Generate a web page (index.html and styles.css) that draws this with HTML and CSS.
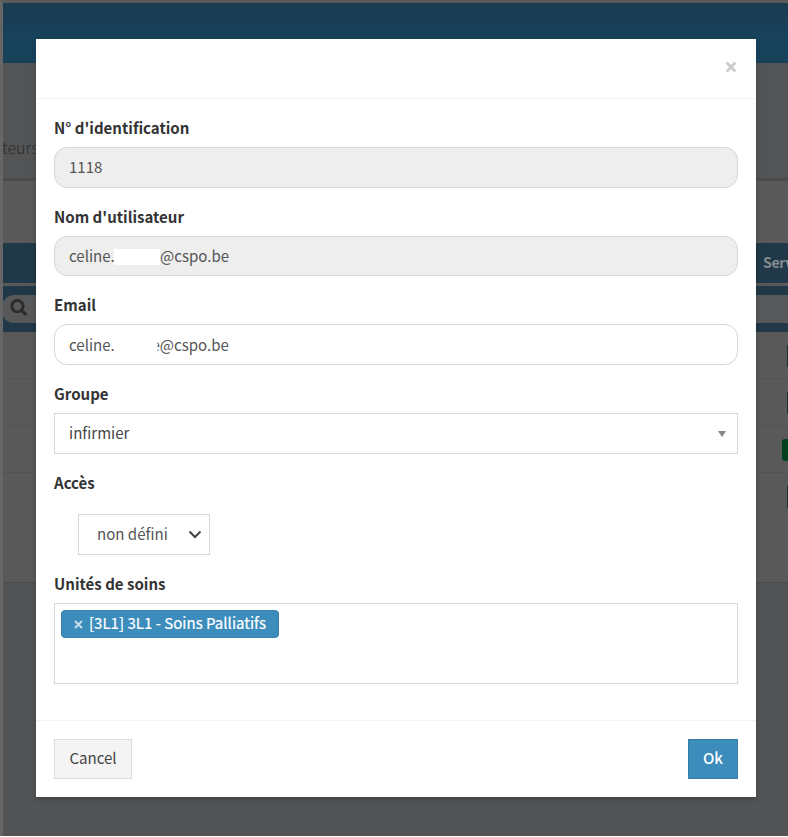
FILE: index.html
```html
<!DOCTYPE html>
<html lang="fr">
<head>
<meta charset="utf-8">
<title>Utilisateurs</title>
<link rel="stylesheet" href="styles.css">
</head>
<body>
<div class="page">
  <div class="navbar"></div>
  <div class="heading"><span>teurs</span></div>
  <div class="toolbar"></div>
  <div class="thead"><span>Serv</span></div>
  <div class="filters">
    <div class="filter filter-left"><svg class="search" viewBox="0 0 16 16"><circle cx="6.6" cy="6.4" r="5"/><path d="M10.5 10.3 L14.6 14.2"/></svg></div>
    <div class="filter"></div>
  </div>
  <div class="row"><i class="tag"></i></div>
  <div class="row"><i class="tag"></i></div>
  <div class="row"><i class="tag wide"></i></div>
  <div class="row last"><i class="tag"></i></div>
  <div class="rest"></div>
</div>

<div class="modal">
  <div class="modal-header">
    <svg class="close" viewBox="0 0 12 12"><path d="M1.6 1.6 L10.4 10.4 M10.4 1.6 L1.6 10.4"/></svg>
  </div>
  <div class="modal-body">
    <div class="group">
      <div class="label">N° d'identification</div>
      <div class="input readonly">1118</div>
    </div>
    <div class="group short">
      <div class="label">Nom d'utilisateur</div>
      <div class="input readonly"><span>celine.</span><i class="mask"></i><span>@cspo.be</span></div>
    </div>
    <div class="group">
      <div class="label">Email</div>
      <div class="input email"><span>celine.</span><span class="tail">e@cspo.be</span></div>
    </div>
    <div class="group">
      <div class="label">Groupe</div>
      <div class="input square"><span class="grow">infirmier</span><i class="arrow"></i></div>
    </div>
    <div class="group access">
      <div class="label">Accès</div>
      <div class="input square select"><span>non défini</span><svg class="chevron" viewBox="0 0 14 9"><path d="M1.5 1.5 L7 7 L12.5 1.5"/></svg></div>
    </div>
    <div class="group">
      <div class="label">Unités de soins</div>
      <div class="multi">
        <div class="chip"><svg viewBox="0 0 9 9"><path d="M1 1 L8 8 M8 1 L1 8"/></svg><span>[3L1] 3L1 - Soins Palliatifs</span></div>
      </div>
    </div>
  </div>
  <div class="modal-footer">
    <div class="btn">Cancel</div>
    <div class="btn primary">Ok</div>
  </div>
</div>
</body>
</html>
```

FILE: styles.css
```css
* { box-sizing: border-box; }
body {
  margin: 0;
  height: 837px;
  overflow: hidden;
  background: #fff;
  font-family: "Noto Sans CJK SC", "Noto Sans", sans-serif;
  font-size: 15.05px;
  line-height: 24px;
  color: #555;
  white-space: nowrap;
}
.page {
  height: 836px;
  display: flex;
  flex-direction: column;
  border-top: 3px solid #595959;
  border-left: 3px solid #666;
  background: #595959;
  overflow: hidden;
}
.page > * { flex: none; }
.navbar { height: 60px; background: linear-gradient(#1a3b51, #18415a 50%); }
.heading {
  height: 118px;
  padding-top: 72px;
  background: #535455;
  border-bottom: 3px solid #4a4b4d;
  color: #2b2c2d;
  font-size: 16px;
  font-weight: 300;
}
.heading span { margin-left: -1px; }
.toolbar { height: 62px; }
.thead {
  height: 40px;
  margin-bottom: 3px;
  padding: 7px 0 0 760px;
  background: #203847;
  color: #868d91;
  font-size: 14px;
  font-weight: 700;
  letter-spacing: -.3px;
}
.filters {
  height: 46px;
  padding: 9px 0;
  display: flex;
  justify-content: space-between;
  background: #203847;
}
.filter { width: 100px; height: 28px; background: #575859; }
.filter-left { border-radius: 12px 0 0 12px; padding: 4px 0 0 8px; margin-left: -1px; }
.search { display: block; width: 18px; height: 18px; fill: none; stroke: #2c2c2c; stroke-width: 2.6; }
.row {
  height: 47px;
  padding-top: 13px;
  border-bottom: 1px solid #525252;
  display: flex;
  justify-content: flex-end;
}
.tag { width: 1px; height: 22px; background: #12372a; }
.tag.wide { width: 6px; background: #00421f; border-radius: 3px 0 0 3px; }
.row.last { height: 110px; border-bottom-color: #4a4b4c; }
.rest { height: 260px; background: #525355; }

.modal {
  position: absolute;
  left: 36px;
  top: 39px;
  width: 720px;
  height: 758px;
  display: flex;
  flex-direction: column;
  background: #fff;
  box-shadow: 0 2px 5px rgba(0, 0, 0, .2);
}
.modal-header {
  height: 60px;
  padding: 22px 19px 0;
  border-bottom: 1px solid #f1f1f1;
  display: flex;
  justify-content: flex-end;
}
.close { width: 12px; height: 12px; fill: none; stroke: #ccc; stroke-width: 2.8; }
.modal-body { height: 621px; padding: 17px 18px 0; }
.group { height: 89px; }
.group.short { height: 88px; }
.label { height: 31px; color: #333; font-weight: 700; }
.input {
  height: 41px;
  padding: 0 14px 2px;
  display: flex;
  align-items: center;
  border: 1px solid #d2d6de;
  border-radius: 13px;
}
.short .input { height: 40px; padding-bottom: 0; }
.email { padding-bottom: 0; }
.readonly { background: #eee; }
.square { border-radius: 0; color: #444; }
.grow { flex: 1; }
.mask { width: 46px; height: 16px; background: #fff; margin: 2px 0 0; }
.short .input span:first-child, .email span:first-child { width: 45px; }
/* redacted part of the address: only the end of its last letter shows */
.tail {
  margin-left: 37.5px;
  clip-path: inset(0 0 0 6px);
}
.arrow { border: 4px solid transparent; border-top: 6px solid #888; border-bottom: 0; margin: 2px -3px 0 0; }
.access { height: 101px; }
.access .label { height: 43px; }
.select { width: 132px; margin-left: 24px; padding: 0 7px 2px 18px; justify-content: space-between; color: #555; }
.chevron { width: 14px; height: 9px; margin-top: 2px; fill: none; stroke: #444; stroke-width: 2; }
.multi { height: 81px; padding: 6px; border: 1px solid #d2d6de; }
.chip {
  width: 218px;
  height: 28px;
  padding: 0 12px;
  display: flex;
  align-items: center;
  gap: 6px;
  background: #3c8dbc;
  border: 1px solid #367fa9;
  border-radius: 4px;
  color: #fff;
}
.chip span { margin-top: -2px; -webkit-text-stroke: .2px #fff; }
.chip svg { flex: none; width: 9px; height: 9px; fill: none; stroke: #c5ddeb; stroke-width: 2; }
.modal-footer {
  height: 77px;
  padding: 18px;
  border-top: 1px solid #f4f4f4;
  display: flex;
  justify-content: space-between;
}
.btn {
  width: 78px;
  height: 40px;
  border: 1px solid #ddd;
  background: #f4f4f4;
  color: #444;
  line-height: 36px;
  text-align: center;
}
.btn.primary { width: 50px; background: #3c8dbc; border-color: #367fa9; color: #fff; font-weight: 500; }
```
